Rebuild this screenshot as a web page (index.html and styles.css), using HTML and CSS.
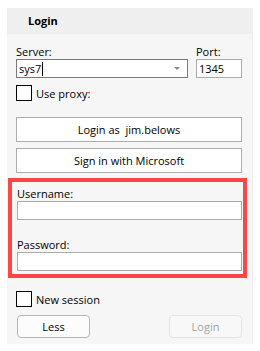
FILE: index.html
```html
<!DOCTYPE html>
<html lang="en">
<head>
    <meta charset="UTF-8">
    <title>Login</title>
    <link rel="stylesheet" href="styles.css">
</head>
<body>
    <div class="panel">
        <div class="panel-head">Login</div>
        <div class="panel-body">
            <div class="server-row">
                <div class="field server">
                    <label>Server:</label>
                    <div class="select">
                        <span>sys7</span><span class="caret"></span>
                        <span class="arrow"></span>
                    </div>
                </div>
                <div class="field port">
                    <label>Port:</label>
                    <div class="textbox">1345</div>
                </div>
            </div>

            <div class="check">
                <span class="box"></span>
                <span>Use proxy:</span>
            </div>

            <button class="wide first">Login as&nbsp; jim.belows</button>
            <button class="wide">Sign in with Microsoft</button>

            <div class="creds">
                <label>Username:</label>
                <div class="textbox"></div>
                <label class="second">Password:</label>
                <div class="textbox"></div>
            </div>

            <div class="check session">
                <span class="box"></span>
                <span>New session</span>
            </div>

            <div class="actions">
                <button class="small">Less</button>
                <button class="small disabled">Login</button>
            </div>
        </div>
    </div>
</body>
</html>
```

FILE: styles.css
```css
body {
    margin: 0;
    padding: 8px 7px 7px 7px;
    background-color: #fff;
    color: #000;
    font-family: 'Open Sans', 'Noto Sans', Arial, sans-serif;
    font-size: 11px;
}
.panel {
    background-color: #f6f6f6;
    height: 336px;
    box-shadow: inset -1px 0 0 #ececec;
}
.panel-head {
    background-color: #efefef;
    height: 26px;
    line-height: 26px;
    padding-left: 21px;
    font-weight: 700;
}
.panel-body {
    padding: 0 11px 0 9px;
}
label {
    display: block;
    line-height: 15px;
}
.server-row {
    display: flex;
    gap: 8px;
    padding-top: 10px;
}
.server {
    width: 172px;
}
.port {
    width: 46px;
}
.select,
.textbox {
    height: 19px;
    line-height: 17px;
    box-sizing: border-box;
    background-color: #fff;
    padding-left: 2px;
}
.select {
    border: 1px solid #7a7a7a;
    position: relative;
    display: flex;
    align-items: center;
}
.caret {
    display: inline-block;
    width: 1px;
    height: 14px;
    background-color: #000;
    margin-left: 1px;
}
.arrow {
    position: absolute;
    right: 7px;
    top: 7px;
    border-left: 3px solid transparent;
    border-right: 3px solid transparent;
    border-top: 3px solid #8a8a8a;
}
.textbox {
    border: 1px solid #ababab;
}
.check {
    display: flex;
    align-items: center;
    gap: 4px;
    margin-top: 7px;
    height: 16px;
}
.box {
    width: 16px;
    height: 16px;
    box-sizing: border-box;
    border: 1px solid #000;
    background-color: #fff;
}
button {
    font-family: inherit;
    font-size: 11px;
    color: #000;
    cursor: pointer;
}
.wide {
    display: block;
    width: 226px;
    height: 25px;
    margin-top: 6px;
    background-color: #fff;
    border: 1px solid #adadad;
    padding: 0;
}
.wide.first {
    margin-top: 16px;
}
.creds {
    margin: 5px -5px 0 -8px;
    border: 4px solid #ff4545;
    padding: 4px 1px 3px 5px;
}
.creds label.second {
    margin-top: 17px;
}
.check.session {
    margin-top: 13px;
}
.actions {
    display: flex;
    justify-content: space-between;
    margin-top: 8px;
    padding-left: 1px;
}
.small {
    width: 73px;
    height: 23px;
    border: 1px solid #b5b5b5;
    border-radius: 4px;
    background-color: #fcfcfc;
    padding: 0;
}
.small.disabled {
    border-color: #e3e3e3;
    background-color: #f8f8f8;
    color: #a3a3a3;
    cursor: default;
}
```
